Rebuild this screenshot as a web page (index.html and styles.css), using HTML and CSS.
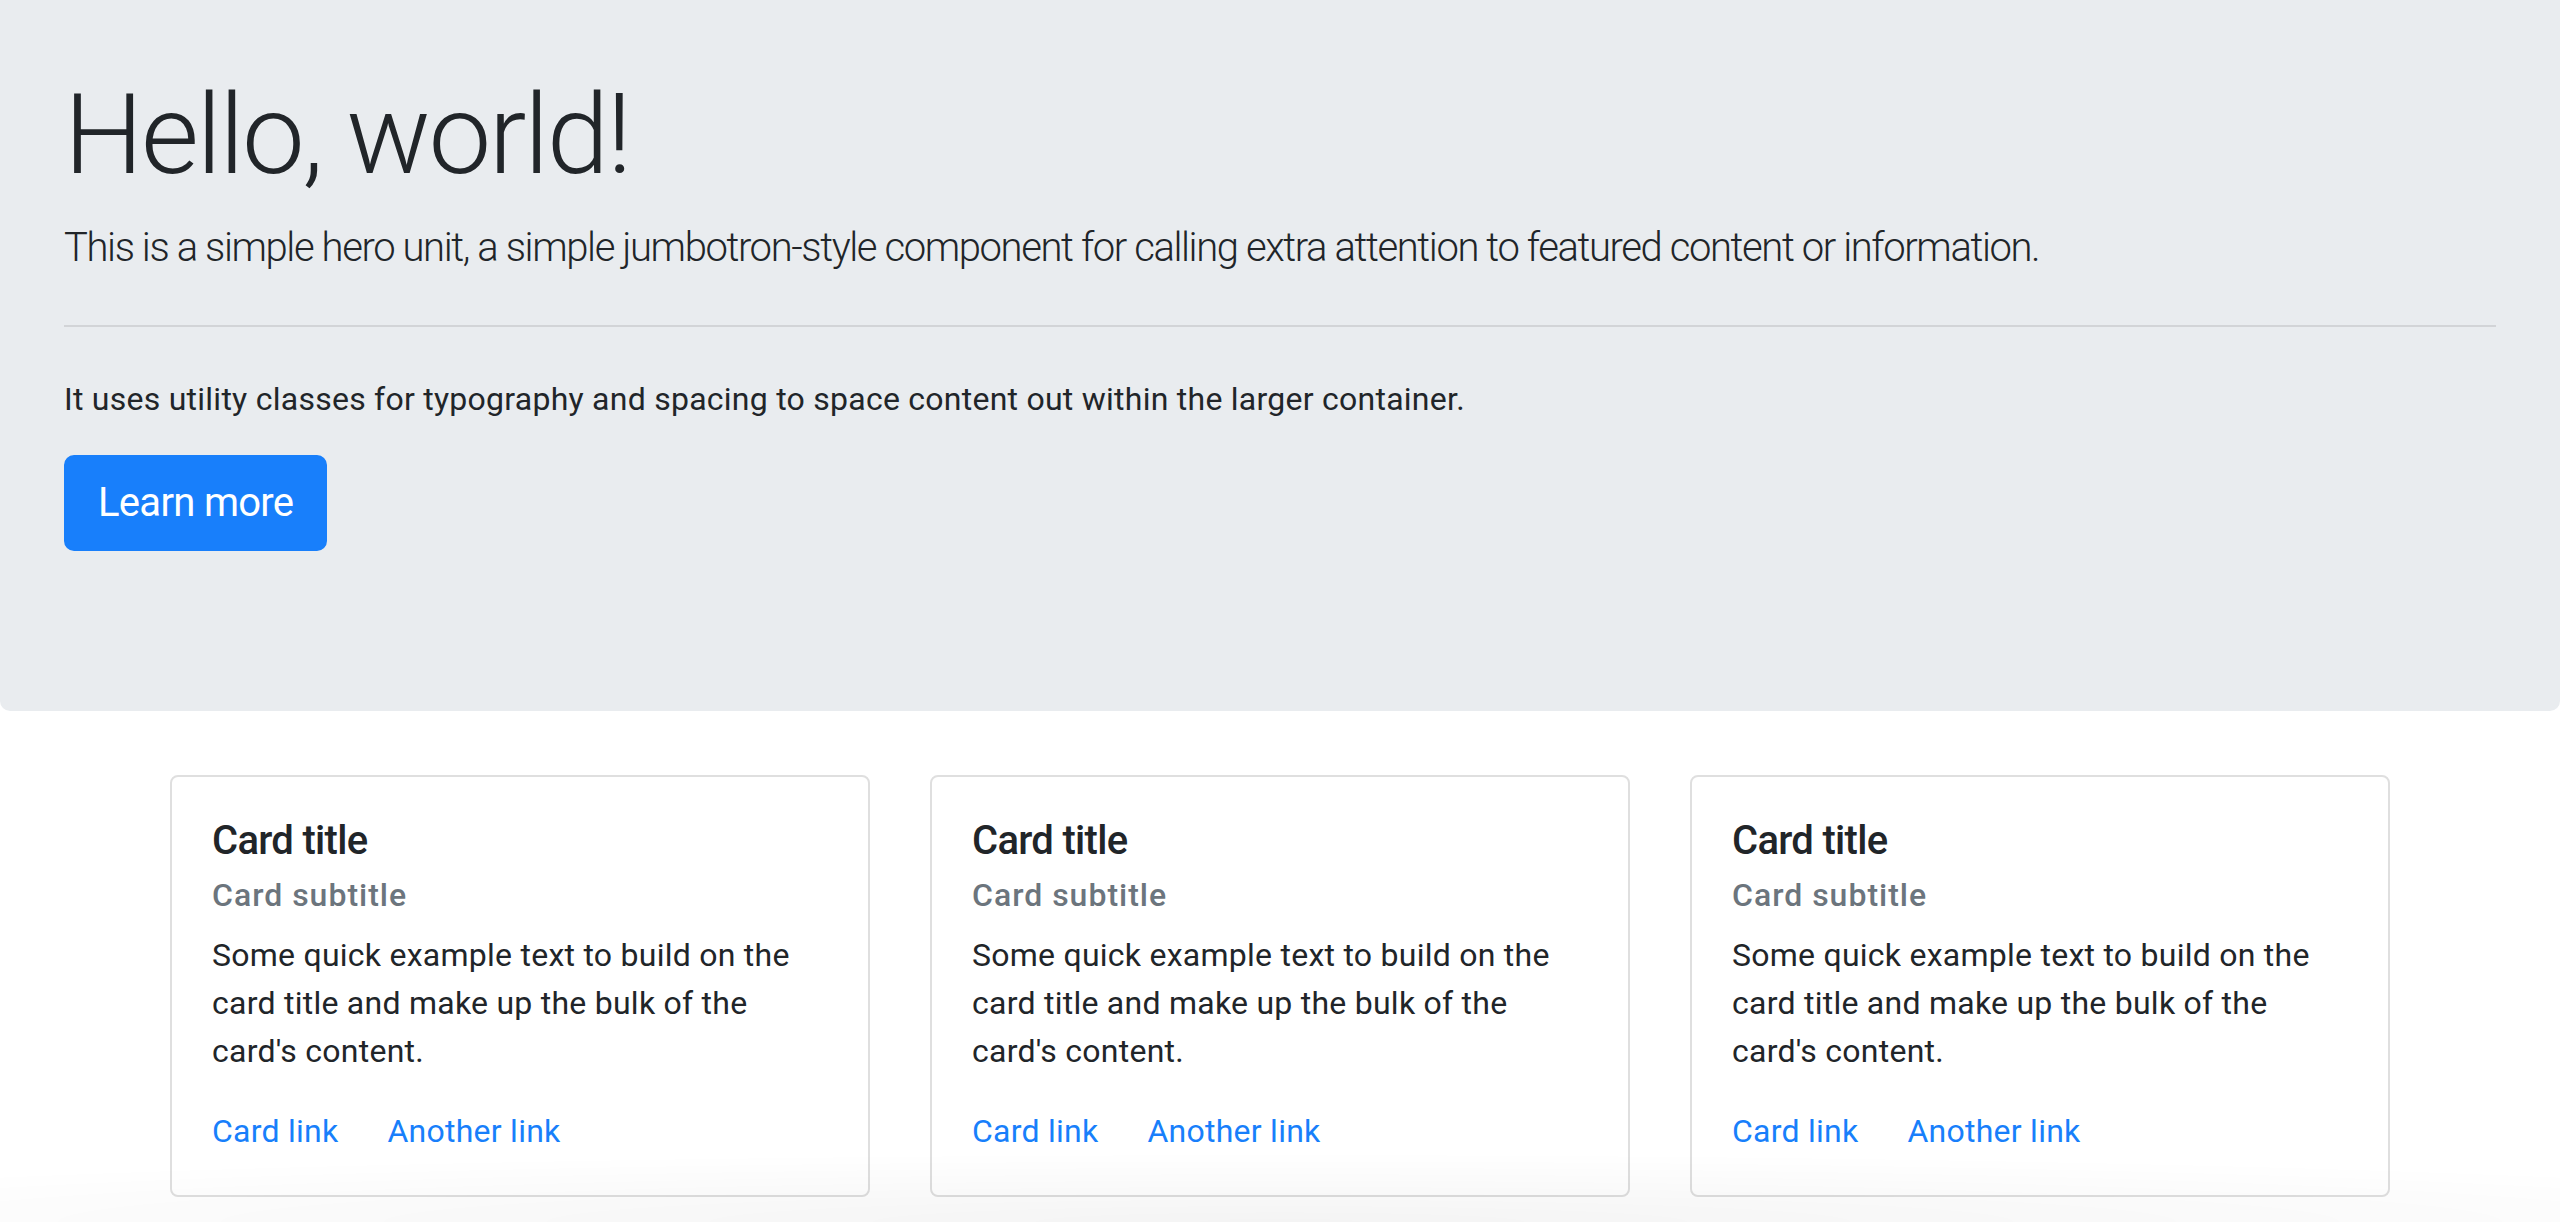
FILE: index.html
```html
<!DOCTYPE html>
<html lang="en">
<head>
<meta charset="utf-8">
<title>Jumbotron</title>
<link rel="stylesheet" href="styles.css">
</head>
<body>
<div class="jumbotron">
  <h1 class="display">Hello, world!</h1>
  <p class="lead">This is a simple hero unit, a simple jumbotron-style component for calling extra attention to featured content or information.</p>
  <hr class="divider">
  <p class="body-text">It uses utility classes for typography and spacing to space content out within the larger container.</p>
  <p class="lead"><a class="btn" href="#">Learn more</a></p>
</div>
<div class="cards">
  <div class="card">
    <h5 class="card-title">Card title</h5>
    <h6 class="card-subtitle">Card subtitle</h6>
    <p class="card-text">Some quick example text to build on the card title and make up the bulk of the card's content.</p>
    <div class="card-links"><a href="#" class="card-link">Card link</a><a href="#" class="card-link">Another link</a></div>
  </div>
  <div class="card">
    <h5 class="card-title">Card title</h5>
    <h6 class="card-subtitle">Card subtitle</h6>
    <p class="card-text">Some quick example text to build on the card title and make up the bulk of the card's content.</p>
    <div class="card-links"><a href="#" class="card-link">Card link</a><a href="#" class="card-link">Another link</a></div>
  </div>
  <div class="card">
    <h5 class="card-title">Card title</h5>
    <h6 class="card-subtitle">Card subtitle</h6>
    <p class="card-text">Some quick example text to build on the card title and make up the bulk of the card's content.</p>
    <div class="card-links"><a href="#" class="card-link">Card link</a><a href="#" class="card-link">Another link</a></div>
  </div>
</div>
<div class="bottom-fade"></div>
</body>
</html>
```
FILE: styles.css
```css
html, body { margin: 0; padding: 0; }
body {
  font-family: Roboto, "Liberation Sans", sans-serif;
  color: #212529;
  background: #fff;
  font-size: 32px;
  line-height: 48px;
  letter-spacing: 0.25px;
}
.jumbotron {
  background: #e9ecef;
  padding: 68px 64px 128px;
  margin-bottom: 64px;
  border-radius: 0 0 10px 10px;
}
.display {
  margin: 0 0 16px;
  font-size: 112px;
  font-weight: 300;
  line-height: 134.4px;
  letter-spacing: -2.4px;
}
.lead {
  margin: 0 0 32px;
  font-size: 40px;
  font-weight: 300;
  line-height: 60px;
  letter-spacing: -1.4px;
}
.divider {
  margin: 47px 0 48px;
  border: 0;
  border-top: 2px solid #d2d4d7;
  height: 0;
}
.body-text { margin: 0 0 32px; }
.btn {
  display: inline-block;
  box-sizing: border-box;
  height: 96px;
  padding: 16px 32px;
  border: 2px solid #187ffb;
  border-radius: 10px;
  background: #187ffb;
  color: #fff;
  font-weight: 400;
  letter-spacing: -0.7px;
  text-decoration: none;
  vertical-align: middle;
}
.cards {
  width: 2220px;
  margin: 0 auto;
  display: grid;
  grid-template-columns: repeat(3, 1fr);
  gap: 60px;
}
.card {
  border: 2px solid #dfdfdf;
  border-radius: 8px;
  padding: 40px 40px 40px;
}
.card-title {
  margin: 0 0 24px;
  font-size: 40px;
  font-weight: 500;
  line-height: 48px;
  letter-spacing: -0.7px;
}
.card-subtitle {
  margin: -13px 0 16px;
  font-size: 32px;
  font-weight: 500;
  line-height: 38.4px;
  letter-spacing: 1px;
  color: #6c757d;
}
.card-text { margin: 0 0 32px; }
.card-links { display: flex; gap: 49px; }
.card-link { color: #187ffb; text-decoration: none; }
.bottom-fade {
  position: fixed;
  left: 0; right: 0; bottom: 0;
  height: 70px;
  background: radial-gradient(ellipse 70% 100% at 50% 100%, rgba(0,0,0,0.045), rgba(0,0,0,0) 100%);
  pointer-events: none;
}
```
